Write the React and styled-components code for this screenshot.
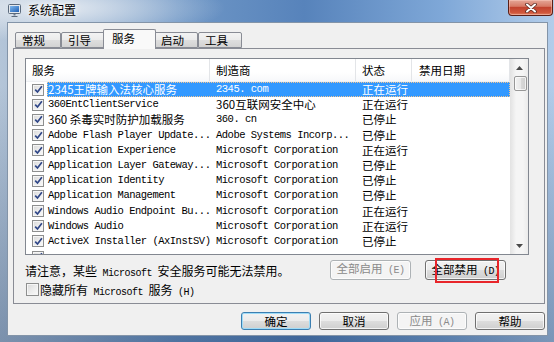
import React from "react";
import styled, { createGlobalStyle } from "styled-components";

const CJK = `"Noto Sans CJK SC", "Liberation Sans", sans-serif`;
const MONO = `"Liberation Mono", "Noto Sans CJK SC", monospace`;

const GlobalStyle = createGlobalStyle`
  html, body { margin: 0; padding: 0; }
  body {
    width: 554px;
    height: 342px;
    overflow: hidden;
    background: #fff;
    font-family: ${CJK};
    color: #000;
  }
  * { box-sizing: border-box; }
`;

const Window = styled.div`
  width: 554px;
  height: 342px;
  display: flex;
  flex-direction: column;
  background:
    radial-gradient(ellipse 170px 34px at 55px 8px, rgba(232, 237, 243, 0.95), rgba(232, 237, 243, 0) 100%),
    linear-gradient(to bottom, rgba(0, 0, 0, 0) 25%, rgba(18, 48, 90, 0.35) 100%),
    linear-gradient(to right, #b4c5d8 0%, #6f97c6 32%, #5783bb 55%, #7fa8d8 80%, #b3cdea 100%);
`;

const TitleBar = styled.div`
  height: 22px;
  display: flex;
  align-items: flex-start;
  padding: 0 1px 0 8px;
`;

const TitleIcon = styled.svg`
  margin-top: 4px;
  flex: none;
`;

const TitleText = styled.span`
  margin: 3px 0 0 7px;
  font-size: 12px;
  line-height: 14px;
  color: #000;
  text-shadow: 0 0 4px #fff, 0 0 8px rgba(255, 255, 255, 0.9);
`;

const CloseButton = styled.div`
  margin-left: auto;
  width: 45px;
  height: 16px;
  border: 1px solid #5a1f17;
  border-top: none;
  border-radius: 0 0 4px 4px;
  background: linear-gradient(#e4a697 0%, #d77a66 42%, #c2432f 50%, #d0573c 85%, #e0876a 100%);
  box-shadow: inset 0 0 0 1px rgba(255, 210, 200, 0.45);
  display: flex;
  align-items: center;
  justify-content: center;
`;

const Body = styled.div`
  flex: 1;
  display: flex;
  padding: 0 6px 6px 7px;
`;

const Client = styled.div`
  flex: 1;
  display: flex;
  flex-direction: column;
  background: #f0f0f0;
  border: 1px solid #8394a8;
`;

const TabStrip = styled.div`
  height: 25px;
  display: flex;
  align-items: flex-end;
  padding-left: 7px;
`;

const Tab = styled.div`
  position: relative;
  z-index: ${(p) => (p.$active ? 2 : 1)};
  width: ${(p) => p.$w}px;
  height: ${(p) => (p.$active ? 20 : 16)}px;
  margin: 0 ${(p) => (p.$active ? -2 : 0)}px ${(p) => (p.$active ? -1 : 0)}px;
  padding-left: ${(p) => (p.$active ? 8 : 6)}px;
  border: 1px solid #898c95;
  border-bottom: ${(p) => (p.$active ? "none" : "1px solid #898c95")};
  border-radius: 2px 2px 0 0;
  background: ${(p) =>
    p.$active ? "#f9f9f9" : "linear-gradient(#f3f3f3 0%, #ebebeb 50%, #dedede 51%, #d3d3d3 100%)"};
  font-size: 11.5px;
  line-height: ${(p) => (p.$active ? 16 : 14)}px;
`;

const TabPanel = styled.div`
  height: 256px;
  margin: 0 2px 0 5px;
  border: 1px solid #898c95;
  background: #f0f0f0;
  padding: 9px 15px 0 11px;
  display: flex;
  flex-direction: column;
`;

const ListView = styled.div`
  height: 197px;
  display: flex;
  border: 1px solid #828790;
  background: #fff;
`;

const ListMain = styled.div`
  width: 484px;
  display: flex;
  flex-direction: column;
  overflow: hidden;
`;

const HeaderRow = styled.div`
  height: 23px;
  flex: none;
  display: grid;
  grid-template-columns: 184px 146px 56px 98px;
  background: linear-gradient(#ffffff 0%, #ffffff 60%, #f7f8fa 100%);
  border-bottom: 1px solid #eef0f3;
`;

const HeaderCell = styled.div`
  padding-left: ${(p) => p.$pad}px;
  border-right: 1px solid #e3e5e8;
  font-size: 11.5px;
  line-height: 22px;
  white-space: nowrap;
`;

const Rows = styled.div`
  flex: 1;
  overflow: hidden;
`;

const Row = styled.div`
  height: 15.2px;
  display: grid;
  grid-template-columns: 21px 1fr;
`;

const CheckCell = styled.div`
  display: flex;
  align-items: center;
  padding-left: 6px;
`;

const RowBody = styled.div`
  display: grid;
  grid-template-columns: 163px 146px 56px 98px;
  background: ${(p) => (p.$selected ? "#3399ff" : "transparent")};
  color: ${(p) => (p.$selected ? "#fff" : "#000")};
  outline: ${(p) => (p.$selected ? "1px dotted #f2c592" : "none")};
  outline-offset: -1px;
`;

const Cell = styled.div`
  padding-left: ${(p) => p.$pad}px;
  white-space: nowrap;
  overflow: hidden;
  font-family: ${(p) => (p.$mono ? MONO : CJK)};
  font-size: ${(p) => (p.$mono ? 10.5 : 11.5)}px;
  letter-spacing: ${(p) => (p.$mono ? -0.5 : 0)}px;
  line-height: 15px;
`;

const ScrollBar = styled.div`
  flex: 1;
  display: flex;
  flex-direction: column;
  border-left: 1px solid #e4e4e4;
  background: linear-gradient(to right, #e5e5e5, #f5f5f5 30%, #f5f5f5 70%, #ebebeb);
`;

const ScrollArrow = styled.div`
  height: 17px;
  flex: none;
  display: flex;
  align-items: center;
  justify-content: center;
`;

const Thumb = styled.div`
  height: 15px;
  margin: 0 1px 0 3px;
  border: 1px solid #979797;
  border-radius: 2px;
  background: linear-gradient(to right, #f3f3f3, #e8e8e8 50%, #d9d9d9 51%, #cfcfcf);
  box-shadow: inset 0 0 0 1px rgba(255, 255, 255, 0.7);
`;

const Track = styled.div`
  flex: 1;
`;

const NoticeRow = styled.div`
  height: 20px;
  margin-top: 5px;
  display: flex;
  align-items: center;
  font-size: 12px;
`;

const ButtonGroup = styled.div`
  margin: 0 23px 0 auto;
  display: flex;
  gap: 14px;
`;

const ButtonWrap = styled.div`
  position: relative;
`;

const Marker = styled.div`
  position: absolute;
  left: 10px;
  top: -2px;
  width: 64px;
  height: 25px;
  border: 2px solid #e8262b;
  pointer-events: none;
`;

const Button = styled.button`
  width: ${(p) => p.$w}px;
  height: ${(p) => p.$h}px;
  padding: 0;
  border: 1px solid ${(p) => (p.disabled ? "#adb2b5" : p.$default ? "#3c7fb1" : "#707070")};
  border-radius: 3px;
  background: ${(p) =>
    p.disabled ? "#f4f4f4" : "linear-gradient(#f2f2f2 0%, #ebebeb 50%, #dddddd 51%, #cfcfcf 100%)"};
  box-shadow: inset 0 0 0 1px ${(p) => (p.$default ? "#9fdcf8" : "rgba(255, 255, 255, 0.75)")};
  color: ${(p) => (p.disabled ? "#8a8a8a" : "#000")};
  font-family: ${CJK};
  font-size: 11.5px;
  line-height: 14px;
`;

const CheckRow = styled.div`
  height: 14px;
  margin-top: 2px;
  display: flex;
  align-items: center;
  gap: 1px;
  padding-left: 1px;
  font-size: 12px;
`;

const Box = styled.span`
  width: ${(p) => p.$size}px;
  height: ${(p) => p.$size}px;
  flex: none;
  display: flex;
  align-items: center;
  justify-content: center;
  border: 1px solid #8e8f8f;
  background: linear-gradient(135deg, #d8d8d8 0%, #ececec 50%, #fafafa 100%);
  box-shadow: inset 0 0 0 1px #f6f6f6;
`;

const Latin = styled.span`
  font-family: ${MONO};
  font-size: 10px;
  letter-spacing: -0.5px;
`;

const Footer = styled.div`
  display: flex;
  justify-content: flex-end;
  gap: 8px;
  padding: 8px 2px 0 0;
`;

// last entry is only peeking in at the bottom edge of the list
const rows = [
  { name: "2345王牌输入法核心服务", maker: "2345. com", state: "正在运行", selected: true },
  { name: "360EntClientService", maker: "360互联网安全中心", state: "正在运行" },
  { name: "360 杀毒实时防护加载服务", maker: "360. cn", state: "已停止" },
  { name: "Adobe Flash Player Update...", maker: "Adobe Systems Incorp...", state: "已停止" },
  { name: "Application Experience", maker: "Microsoft Corporation", state: "正在运行" },
  { name: "Application Layer Gateway...", maker: "Microsoft Corporation", state: "已停止" },
  { name: "Application Identity", maker: "Microsoft Corporation", state: "已停止" },
  { name: "Application Management", maker: "Microsoft Corporation", state: "已停止" },
  { name: "Windows Audio Endpoint Bu...", maker: "Microsoft Corporation", state: "正在运行" },
  { name: "Windows Audio", maker: "Microsoft Corporation", state: "正在运行" },
  { name: "ActiveX Installer (AxInstSV)", maker: "Microsoft Corporation", state: "已停止" },
  { name: "", maker: "", state: "" },
];

const tabs = [
  { label: "常规", w: 46 },
  { label: "引导", w: 44 },
  { label: "服务", w: 53, active: true },
  { label: "启动", w: 44 },
  { label: "工具", w: 44 },
];

const hasCJK = (s) => /[^\x00-\x7F]/.test(s);

// split a label so ascii runs get the narrow mono font
const Mixed = ({ text }) =>
  text
    .split(/([\x20-\x7E]+)/)
    .filter(Boolean)
    .map((part, i) => (/^[\x20-\x7E]+$/.test(part) ? <Latin key={i}>{part}</Latin> : part));

const Check = ({ checked, size = 12 }) => (
  <Box $size={size}>
    {checked && (
      <svg width="9" height="9" viewBox="0 0 9 9">
        <path d="M1.2 4.6 L3.5 7 L7.9 1.3" fill="none" stroke="#2f4687" strokeWidth="1.7" />
      </svg>
    )}
  </Box>
);

const Arrow = ({ down }) => (
  <svg width="7" height="4" viewBox="0 0 7 4">
    <path d={down ? "M0 0 H7 L3.5 4 Z" : "M0 4 H7 L3.5 0 Z"} fill="#4a4a4a" />
  </svg>
);

const App = () => {
  return (
    <>
      <GlobalStyle />
      <Window>
        <TitleBar>
          <TitleIcon width="13" height="13" viewBox="0 0 13 13">
            <defs>
              <linearGradient id="scr" x1="0" y1="0" x2="1" y2="1">
                <stop offset="0" stopColor="#7fb8ee" />
                <stop offset="1" stopColor="#1f5fb5" />
              </linearGradient>
            </defs>
            <rect x="0.5" y="0.5" width="12" height="9" rx="1" fill="#e3e8ee" stroke="#5b6a7d" />
            <rect x="2" y="2" width="9" height="6" fill="url(#scr)" />
            <rect x="5.5" y="10" width="2" height="1.5" fill="#6b7a8e" />
            <path d="M3.5 12.5 H9.5" stroke="#5b6a7d" />
          </TitleIcon>
          <TitleText>系统配置</TitleText>
          <CloseButton>
            <svg width="12" height="10" viewBox="0 0 12 10">
              <path d="M2 1.5 L10 8.5 M10 1.5 L2 8.5" stroke="#5a2a22" strokeWidth="3.6" strokeLinecap="round" />
              <path d="M2 1.5 L10 8.5 M10 1.5 L2 8.5" stroke="#ffffff" strokeWidth="2" strokeLinecap="round" />
            </svg>
          </CloseButton>
        </TitleBar>
        <Body>
          <Client>
            <TabStrip>
              {tabs.map((t) => (
                <Tab key={t.label} $w={t.w} $active={t.active}>
                  {t.label}
                </Tab>
              ))}
            </TabStrip>
            <TabPanel>
              <ListView>
                <ListMain>
                  <HeaderRow>
                    <HeaderCell $pad={6}>服务</HeaderCell>
                    <HeaderCell $pad={6}>制造商</HeaderCell>
                    <HeaderCell $pad={6}>状态</HeaderCell>
                    <HeaderCell $pad={7}>禁用日期</HeaderCell>
                  </HeaderRow>
                  <Rows>
                    {rows.map((r, i) => (
                      <Row key={i}>
                        <CheckCell>
                          <Check checked />
                        </CheckCell>
                        <RowBody $selected={r.selected}>
                          <Cell $pad={1} $mono={!hasCJK(r.name)}>
                            {r.name}
                          </Cell>
                          <Cell $pad={6} $mono={!hasCJK(r.maker)}>
                            {r.maker}
                          </Cell>
                          <Cell $pad={6}>{r.state}</Cell>
                          <Cell $pad={7} />
                        </RowBody>
                      </Row>
                    ))}
                  </Rows>
                </ListMain>
                <ScrollBar>
                  <ScrollArrow>
                    <Arrow />
                  </ScrollArrow>
                  <Thumb />
                  <Track />
                  <ScrollArrow>
                    <Arrow down />
                  </ScrollArrow>
                </ScrollBar>
              </ListView>
              <NoticeRow>
                <span>
                  <Mixed text="请注意，某些 Microsoft 安全服务可能无法禁用。" />
                </span>
                <ButtonGroup>
                  <Button $w={81} $h={20} disabled>
                    <Mixed text="全部启用 (E)" />
                  </Button>
                  <ButtonWrap>
                    <Button $w={81} $h={20}>
                      <Mixed text="全部禁用 (D)" />
                    </Button>
                    <Marker />
                  </ButtonWrap>
                </ButtonGroup>
              </NoticeRow>
              <CheckRow>
                <Check size={13} />
                <span>
                  <Mixed text="隐藏所有 Microsoft 服务 (H)" />
                </span>
              </CheckRow>
            </TabPanel>
            <Footer>
              <Button $w={70} $h={18} $default>
                确定
              </Button>
              <Button $w={70} $h={18}>
                取消
              </Button>
              <Button $w={70} $h={18} disabled>
                <Mixed text="应用 (A)" />
              </Button>
              <Button $w={70} $h={18}>
                帮助
              </Button>
            </Footer>
          </Client>
        </Body>
      </Window>
    </>
  );
};

export default App;
